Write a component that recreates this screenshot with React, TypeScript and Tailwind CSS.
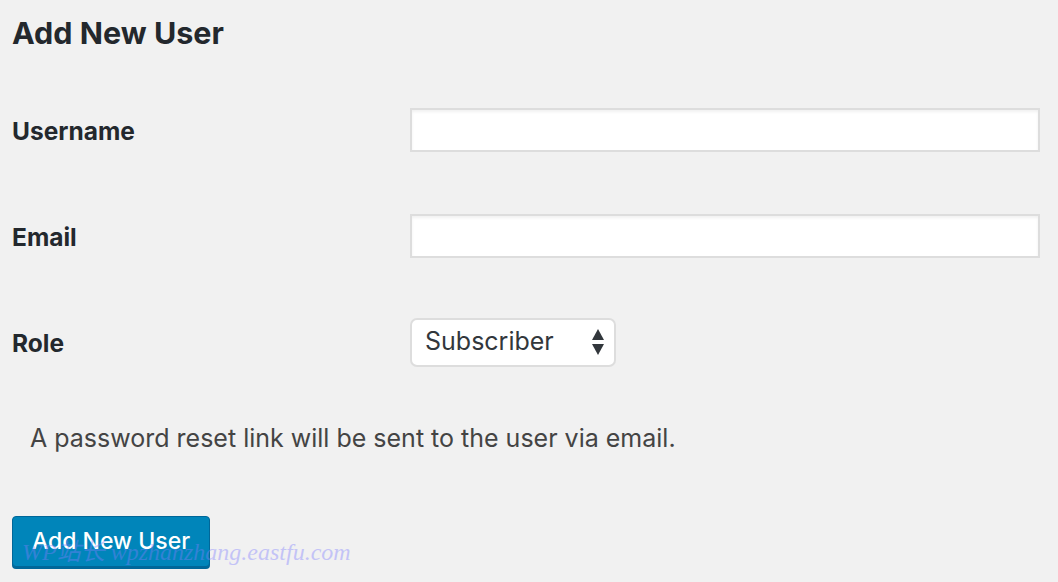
import React from "react";

const font = { fontFamily: "Inter, 'Liberation Sans', 'Noto Sans CJK SC', sans-serif" };

function Row({ label, children }: { label: string; children: React.ReactNode }) {
  return (
    <div className="flex h-[106px] items-center">
      <div className="w-[398px] shrink-0 pt-[2px] text-[24.5px] font-bold text-[#23282d]">{label}</div>
      <div className="flex-1">{children}</div>
    </div>
  );
}

export default function App() {
  return (
    <div className="relative min-h-[582px] w-full overflow-hidden bg-[#f1f1f1] pl-[12px] pr-[18px]" style={font}>
      <h1 className="pt-[15px] text-[30.5px] font-bold leading-[36px] text-[#23282d]">Add New User</h1>
      <div className="mt-[26px]">
        <Row label="Username">
          <input className="block h-[44px] w-full border-2 border-[#dddddd] bg-white shadow-[inset_0_2px_3px_rgba(0,0,0,0.06)] outline-none" />
        </Row>
        <Row label="Email">
          <input className="block h-[44px] w-full border-2 border-[#dddddd] bg-white shadow-[inset_0_2px_3px_rgba(0,0,0,0.06)] outline-none" />
        </Row>
        <Row label="Role">
          <div className="flex h-[49px] w-[206px] items-center justify-between rounded-[7px] border-2 border-[#dddddd] bg-white pl-[13px] pr-[9px]">
            <span className="text-[25px] text-[#32373c]">Subscriber</span>
            <svg width="14" height="28" viewBox="0 0 14 28">
              <polygon points="7,1 13,12 1,12" fill="#32373c" />
              <polygon points="1,16 13,16 7,27" fill="#32373c" />
            </svg>
          </div>
        </Row>
      </div>
      <p className="mt-[28px] pl-[18px] text-[25px] leading-[30px] text-[#444]">
        A password reset link will be sent to the user via email.
      </p>
      <div className="mt-[63px]">
        <button className="flex h-[51px] w-[198px] items-center justify-center rounded-[4px] border border-[#006799] bg-[#0085ba] text-[23px] font-medium text-white shadow-[0_2px_0_#006799]">
          Add New User
        </button>
      </div>
      <div
        className="pointer-events-none absolute left-[22px] top-[534px] text-[24px] italic text-[#7f7fff] opacity-40"
        style={{ fontFamily: "'Liberation Serif', 'Noto Sans CJK SC', serif" }}
      >
        WP站长 wpzhanzhang.eastfu.com
      </div>
    </div>
  );
}
